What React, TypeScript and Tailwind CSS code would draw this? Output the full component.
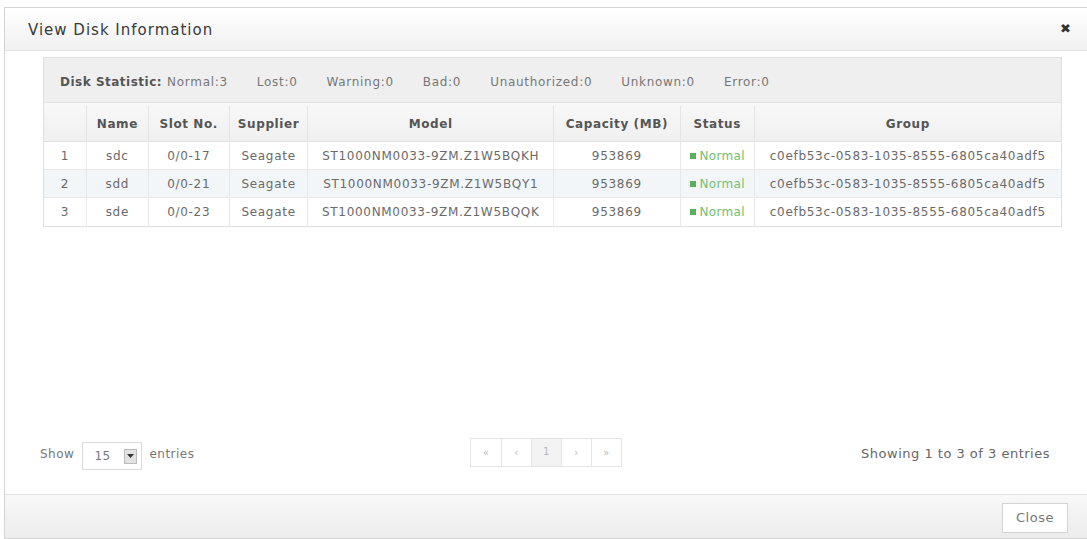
import React from "react";

const cols = [42, 62, 81, 79, 246, 127, 74, 308];
const headers = ["", "Name", "Slot No.", "Supplier", "Model", "Capacity (MB)", "Status", "Group"];
const rows = [
  ["1", "sdc", "0/0-17", "Seagate", "ST1000NM0033-9ZM.Z1W5BQKH", "953869", "Normal", "c0efb53c-0583-1035-8555-6805ca40adf5"],
  ["2", "sdd", "0/0-21", "Seagate", "ST1000NM0033-9ZM.Z1W5BQY1", "953869", "Normal", "c0efb53c-0583-1035-8555-6805ca40adf5"],
  ["3", "sde", "0/0-23", "Seagate", "ST1000NM0033-9ZM.Z1W5BQQK", "953869", "Normal", "c0efb53c-0583-1035-8555-6805ca40adf5"],
];
const stats = ["Normal:3", "Lost:0", "Warning:0", "Bad:0", "Unauthorized:0", "Unknown:0", "Error:0"];

export default function App() {
  return (
    <div
      className="w-[1087px] h-[539px] overflow-hidden bg-white pt-[7px] pl-[4px]"
      style={{ fontFamily: '"DejaVu Sans", Verdana, sans-serif' }}
    >
      <div className="w-[1090px] h-[532px] border border-[#d4d4d4] flex flex-col bg-white">
        {/* header */}
        <div className="h-[43px] shrink-0 flex items-center justify-between border-b border-[#e2e2e2] bg-gradient-to-b from-white to-[#f1f1f1] pl-[23px] pr-[18px] pt-[3px]">
          <span className="text-[15px] tracking-[1px] text-[#3a3a3a]">View Disk Information</span>
          <span className="text-[13px] font-bold text-[#333] mr-[4px] mt-[-3px]">✖</span>
        </div>
        {/* body */}
        <div className="flex-1 flex flex-col px-[38px] pt-[6px] pb-[24px]">
          <div className="w-[1019px] border border-[#e0e0e0]">
            <div className="h-[45px] bg-[#efefef] border-b border-[#e2e2e2] flex items-center pl-[16px] pt-[3px] text-[12px] text-[#777]">
              <span className="font-bold tracking-[0.5px] text-[#555] mr-[5px]">Disk Statistic:</span>
              <div className="flex gap-[29px] tracking-[0.7px]">
                {stats.map((s) => (
                  <span key={s}>{s}</span>
                ))}
              </div>
            </div>
            <div className="flex h-[39px] pt-[3px] bg-gradient-to-b from-[#f8f8f8] to-[#f0f0f0] border-b border-[#e2e2e2]">
              {headers.map((h, i) => (
                <div
                  key={i}
                  style={{ width: cols[i] }}
                  className={`flex items-center justify-center text-[12px] tracking-[0.6px] font-bold text-[#555] ${i > 0 ? "border-l border-[#e4e4e4]" : ""}`}
                >
                  {h}
                </div>
              ))}
            </div>
            {rows.map((r, ri) => (
              <div
                key={ri}
                className={`flex h-[28px] ${ri < 2 ? "border-b border-[#e8e8e8]" : ""} ${ri === 1 ? "bg-[#f3f6f8]" : "bg-white"}`}
              >
                {r.map((c, i) => (
                  <div
                    key={i}
                    style={{ width: cols[i] }}
                    className={`flex items-center justify-center text-[12px] tracking-[0.7px] text-[#6a6a6a] whitespace-nowrap ${i > 0 ? "border-l border-[#e8e8e8]" : ""}`}
                  >
                    {i === 6 ? (
                      <span className="flex items-center text-[#72c072] tracking-[0.3px]">
                        <span className="inline-block w-[6px] h-[6px] bg-[#5cae5c] mr-[4px]" />
                        {c}
                      </span>
                    ) : (
                      c
                    )}
                  </div>
                ))}
              </div>
            ))}
          </div>
          <div className="mt-auto flex items-center w-[1019px] text-[12px] tracking-[0.5px] text-[#777]">
            <div className="w-[427px] flex items-center">
              <span className="ml-[-3px]">Show</span>
              <div className="ml-[8px] w-[60px] h-[28px] mt-[4px] border border-[#dcdcdc] flex items-center justify-between pl-[11px] pr-[4px]">
                <span>15</span>
                <span className="w-[13px] h-[15px] bg-[#e2e2e2] border border-[#bbb] flex items-center justify-center">
                  <svg width="7" height="4" viewBox="0 0 7 4"><path d="M0 0h7L3.5 4z" fill="#333" /></svg>
                </span>
              </div>
              <span className="ml-[7px]">entries</span>
            </div>
            <div className="flex h-[29px] mt-[-4px] border border-[#e4e4e4] text-[10px] text-[#bbb]">
              {["«", "‹", "1", "›", "»"].map((p, i) => (
                <div
                  key={i}
                  className={`w-[30px] flex items-center justify-center ${i > 0 ? "border-l border-[#e4e4e4]" : ""} ${i === 2 ? "bg-[#f3f3f3] text-[11px]" : ""}`}
                >
                  {p}
                </div>
              ))}
            </div>
            <div className="flex-1 flex justify-end pr-[12px]">
              <span className="text-[13px] text-[#666]">Showing 1 to 3 of 3 entries</span>
            </div>
          </div>
        </div>
        {/* footer */}
        <div className="h-[44px] shrink-0 border-t border-[#e2e2e2] bg-gradient-to-b from-[#f8f8f8] to-[#ececec] flex items-center justify-end pr-[25px]">
          <div className="w-[66px] h-[30px] mt-[2px] bg-white border border-[#d4d4d4] flex items-center justify-center text-[13px] tracking-[0.5px] text-[#777]">
            Close
          </div>
        </div>
      </div>
    </div>
  );
}
